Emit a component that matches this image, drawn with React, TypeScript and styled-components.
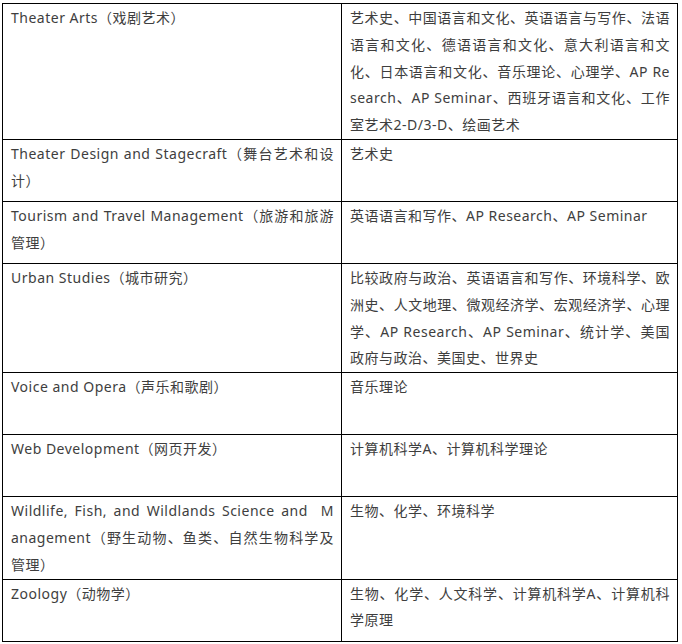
import React from 'react'
import styled, { createGlobalStyle } from 'styled-components'

const GlobalStyle = createGlobalStyle`
  html, body {
    margin: 0;
    padding: 0;
    background: #fff;
  }
  body {
    font-family: "Noto Sans", "Noto Sans CJK SC", sans-serif;
    color: #3e3e3e;
  }
`

const Page = styled.div`
  padding: 3px 0 0 2px;
`

const Table = styled.table`
  width: 676px;
  table-layout: fixed;
  border-collapse: separate;
  border-spacing: 0;
  border-top: 1px solid #000;
  border-left: 1px solid #000;
`

const Col = styled.col<{ $width?: number }>`
  width: ${(p) => (p.$width ? `${p.$width}px` : 'auto')};
`

const Cell = styled.td`
  box-sizing: border-box;
  height: 62px;
  padding: 1px 7px 0 8px;
  vertical-align: top;
  border-right: 1px solid #000;
  border-bottom: 1px solid #000;
  font-size: 14px;
  line-height: 26.8px;
  letter-spacing: 0.5px;
  text-align: justify;
  word-break: break-all;
`

// keeps a run together so the line breaks where the source did
const Keep = styled.span`
  white-space: nowrap;
`

interface Row {
    major: React.ReactNode
    courses: string
}

const rows: Row[] = [
    {
        major: 'Theater Arts（戏剧艺术）',
        courses:
            '艺术史、中国语言和文化、英语语言与写作、法语语言和文化、德语语言和文化、意大利语言和文化、日本语言和文化、音乐理论、心理学、AP Research、AP Seminar、西班牙语言和文化、工作室艺术2-D/3-D、绘画艺术',
    },
    { major: 'Theater Design and Stagecraft（舞台艺术和设计）', courses: '艺术史' },
    { major: 'Tourism and Travel Management（旅游和旅游管理）', courses: '英语语言和写作、AP Research、AP Seminar' },
    {
        major: 'Urban Studies（城市研究）',
        courses:
            '比较政府与政治、英语语言和写作、环境科学、欧洲史、人文地理、微观经济学、宏观经济学、心理学、AP Research、AP Seminar、统计学、美国政府与政治、美国史、世界史',
    },
    { major: 'Voice and Opera（声乐和歌剧）', courses: '音乐理论' },
    { major: 'Web Development（网页开发）', courses: '计算机科学A、计算机科学理论' },
    {
        major: (
            <>
                Wildlife, Fish, and Wildlands Science and&nbsp; M<Keep>anagement（野生动物、鱼类、自然生物科学及</Keep>管理）
            </>
        ),
        courses: '生物、化学、环境科学',
    },
    { major: 'Zoology（动物学）', courses: '生物、化学、人文科学、计算机科学A、计算机科学原理' },
]

const App = () => {
    return (
        <Page>
            <GlobalStyle />
            <Table>
                <colgroup>
                    <Col $width={339} />
                    <Col />
                </colgroup>
                <tbody>
                    {rows.map((row, index) => (
                        <tr key={index}>
                            <Cell>{row.major}</Cell>
                            <Cell>{row.courses}</Cell>
                        </tr>
                    ))}
                </tbody>
            </Table>
        </Page>
    )
}

export default App
